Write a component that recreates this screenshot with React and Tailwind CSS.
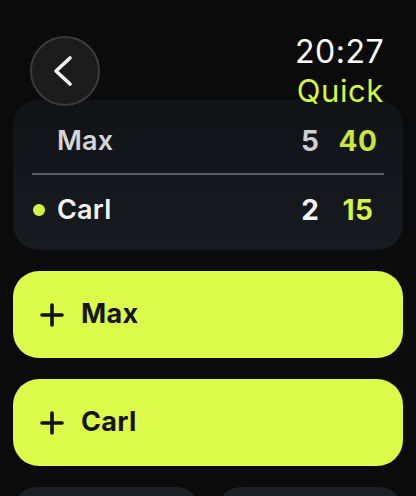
import React from 'react';

const LIME = 'text-[#d6f53f]';

const ScoreRow = ({ name, games, points, serving, dim }) => (
  <div className="flex items-center h-[40px] relative">
    {serving && (
      <span className="absolute left-[20px] top-[14px] w-[12px] h-[12px] rounded-full bg-[#d6f53f]" />
    )}
    <span className={`ml-[44px] flex-1 text-[27px] font-semibold tracking-[0.2px] ${dim ? 'text-[#d4d4d4]' : 'text-[#f2f2f2]'}`}>
      {name}
    </span>
    <span className={`w-[40px] text-center text-[28px] font-bold ${dim ? 'text-[#cfcfcf]' : 'text-[#f2f2f2]'}`}>
      {games}
    </span>
    <span className={`w-[56px] mr-[17px] text-center text-[28px] font-bold tracking-[0.5px] ${dim ? 'text-[#c9e63c]' : LIME}`}>
      {points}
    </span>
  </div>
);

const AddButton = ({ name }) => (
  <button className="flex items-center h-[87px] w-full rounded-[26px] bg-[#dbfa4a] pl-[27px]">
    <svg width="24" height="24" viewBox="0 0 24 24" className="text-[#111]">
      <path d="M12 2v20M2 12h20" stroke="currentColor" strokeWidth="3.6" strokeLinecap="round" />
    </svg>
    <span className="ml-[17px] text-[27px] font-bold text-[#141414] tracking-[0.3px]">{name}</span>
  </button>
);

export default function App() {
  return (
    <div
      className="w-[416px] h-[496px] overflow-hidden bg-[#0a0b0a] px-[13px]"
      style={{ fontFamily: 'Inter, "Noto Sans", sans-serif' }}
    >
      <div className="flex justify-between h-[100px]">
        <button className="relative z-10 mt-[36px] ml-[17px] w-[70px] h-[70px] rounded-full bg-[#1b1c1b] border-2 border-[#3a3c3a] flex items-center justify-center">
          <svg width="24" height="32" viewBox="0 0 24 32" className="-ml-[4px]">
            <path d="M19 3 L5 16 L19 29" fill="none" stroke="#f2f2f2" strokeWidth="3.6" strokeLinecap="round" strokeLinejoin="round" />
          </svg>
        </button>
        <div className="flex flex-col items-end mt-[33px] mr-[19px]">
          <span className="text-[32px] leading-[38px] text-white tracking-[0.5px]">20:27</span>
          <span className={`text-[31px] leading-[40px] tracking-[0.6px] ${LIME}`}>Quick</span>
        </div>
      </div>

      <div className="h-[150px] rounded-[26px] bg-gradient-to-b from-[#111417] to-[#171a1e] pt-[21px]">
        <ScoreRow name="Max" games="5" points="40" dim />
        <div className="mx-[19px] mt-[12px] mb-[15px] h-[2px] bg-[#5b5e63]" />
        <ScoreRow name="Carl" games="2" points="15" serving />
      </div>

      <div className="flex flex-col gap-[21px] mt-[21px]">
        <AddButton name="Max" />
        <AddButton name="Carl" />
        <div className="grid grid-cols-2 gap-[17px]">
          <div className="h-[60px] rounded-[24px] bg-[#1c1f24]" />
          <div className="h-[60px] rounded-[24px] bg-[#1c1f24]" />
        </div>
      </div>
    </div>
  );
}
